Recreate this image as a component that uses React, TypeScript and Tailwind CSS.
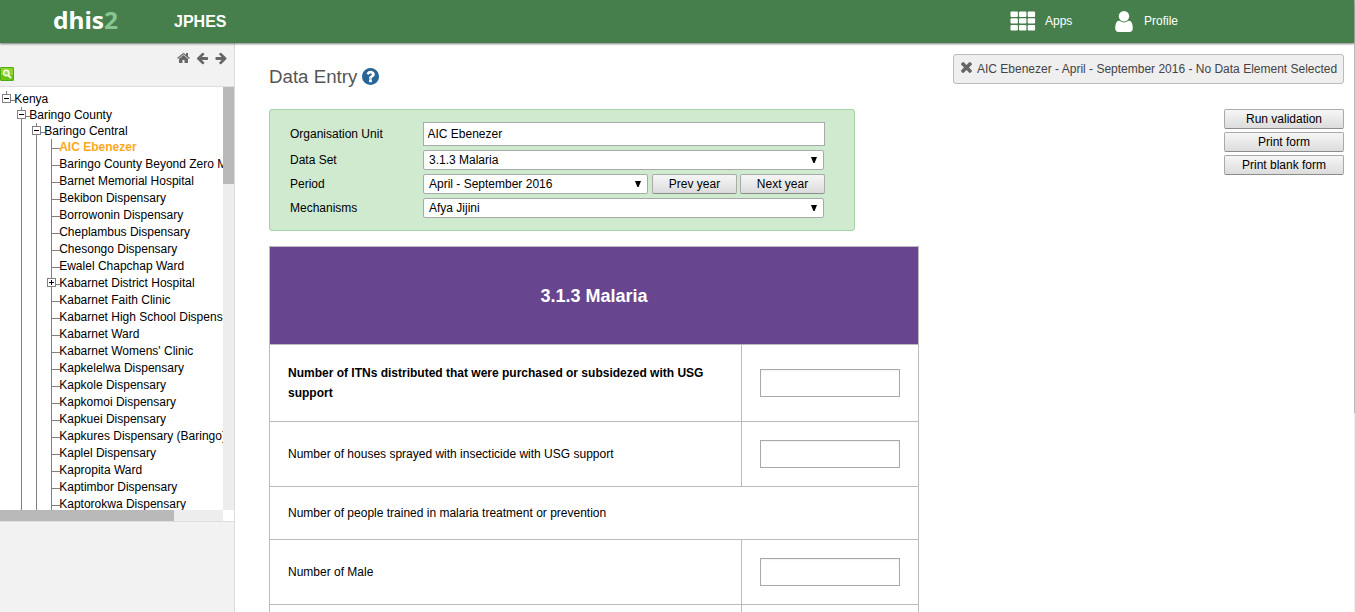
import React from "react";

const ICONS = {
  home: {
    box: "0 0 1664 1792",
    d: "M1408 992v480q0 26-19 45t-45 19h-384v-384h-256v384h-384q-26 0-45-19t-19-45v-480q0-1 .5-3t.5-3l575-474 575 474q1 2 1 6zm223-69l-62 74q-8 9-21 11h-3q-13 0-21-7l-692-577-692 577q-12 8-24 7-13-2-21-11l-62-74q-8-10-7-23.5t11-21.5l719-599q32-26 76-26t76 26l244 204v-195q0-14 9-23t23-9h192q14 0 23 9t9 23v408l219 182q10 8 11 21.5t-7 23.5z",
  },
  arrow: {
    box: "0 0 1664 1792",
    d: "M1600 896v128q0 53-32.5 90.5t-84.5 37.5h-704l293 294q38 36 38 90t-38 90l-75 76q-37 37-90 37-52 0-91-37l-651-652q-37-37-37-90 0-52 37-91l651-650q38-38 91-38 52 0 90 38l75 74q38 38 38 91t-38 91l-293 293h704q52 0 84.5 37.5t32.5 90.5z",
  },
  user: {
    box: "256 128 1280 1536",
    d: "M1536 1399q0 109-62.5 187t-150.5 78h-854q-88 0-150.5-78t-62.5-187q0-85 8.5-160.5t31.5-152 58.5-131 94-89 134.5-34.5q131 128 313 128t313-128q76 0 134.5 34.5t94 89 58.5 131 31.5 152 8.5 160.5zm-256-887q0 159-112.5 271.5t-271.5 112.5-271.5-112.5-112.5-271.5 112.5-271.5 271.5-112.5 271.5 112.5 112.5 271.5z",
  },
  help: {
    box: "128 128 1536 1536",
    d: "M1024 1376v-192q0-14-9-23t-23-9h-192q-14 0-23 9t-9 23v192q0 14 9 23t23 9h192q14 0 23-9t9-23zm256-672q0-88-55.5-163t-138.5-116-170-41q-243 0-371 213-15 24 8 42l132 100q7 6 19 6 16 0 25-12 53-68 86-92 34-24 86-24 48 0 85.5 26t37.5 59q0 38-20 61t-68 45q-63 28-115.5 86.5t-52.5 125.5v36q0 14 9 23t23 9h192q14 0 23-9t9-23q0-19 21.5-49.5t54.5-49.5q32-18 49-28.5t46-35 44.5-48 28-60.5 12.5-81zm384 192q0 209-103 385.5t-279.5 279.5-385.5 103-385.5-103-279.5-279.5-103-385.5 103-385.5 279.5-279.5 385.5-103 385.5 103 279.5 279.5 103 385.5z",
  },
  close: {
    box: "302 366 1188 1188",
    d: "M1490 1322q0 40-28 68l-136 136q-28 28-68 28t-68-28l-294-294-294 294q-28 28-68 28t-68-28l-136-136q-28-28-28-68t28-68l294-294-294-294q-28-28-28-68t28-68l136-136q28-28 68-28t68 28l294 294 294-294q28-28 68-28t68 28l136 136q28 28 28 68t-28 68l-294 294 294 294q28 28 28 68z",
  },
};

function Icon({ name, className }: { name: keyof typeof ICONS; className: string }) {
  return (
    <svg viewBox={ICONS[name].box} className={className} fill="currentColor">
      <path d={ICONS[name].d} />
    </svg>
  );
}

function AppsIcon() {
  return (
    <svg viewBox="0 0 26 20" className="mb-0.5 h-5 w-[26px]" fill="currentColor">
      {[0.5, 7.2, 14].map((y) =>
        [0.5, 9, 17.7].map((x) => <rect key={`${x}-${y}`} x={x} y={y} width="7.4" height="5.4" rx="1" />)
      )}
    </svg>
  );
}

function SearchIcon() {
  return (
    <svg viewBox="0 0 14 14" className="h-3.5 w-3.5">
      <rect x="0.5" y="0.5" width="13" height="13" rx="0.5" fill="#8ed629" stroke="#52ab14" />
      <rect x="1" y="8" width="12" height="5" fill="#68c40c" />
      <circle cx="6.2" cy="6" r="2.7" fill="#a5de5c" stroke="#f6fcef" strokeWidth="1.4" />
      <path d="M8 8l3 3" stroke="#f6fcef" strokeWidth="1.8" />
    </svg>
  );
}

type Cell = "blank" | "line" | "leaf" | "root" | "minus" | "plus";

function TreeCell({ kind }: { kind: Cell }) {
  if (kind === "blank") return <div className="w-[15px] shrink-0" />;
  if (kind === "line")
    return (
      <div className="flex w-[15px] shrink-0 pl-1.5">
        <div className="w-px bg-[#808080]" />
      </div>
    );
  if (kind === "leaf")
    return (
      <div className="flex w-[15px] shrink-0 pl-1.5">
        <div className="w-px bg-[#808080]" />
        <div className="mt-[9px] h-px flex-1 bg-[#808080]" />
      </div>
    );
  return (
    <div className="flex w-[15px] shrink-0 pl-0.5">
      <div className="flex w-[9px] flex-col items-center">
        <div className="h-[3px] w-px bg-[#808080]" />
        <svg viewBox="0 0 9 9" className="h-[9px] w-[9px] shrink-0" shapeRendering="crispEdges">
          <rect x="0.5" y="0.5" width="8" height="8" fill="#fff" stroke="#808080" />
          <rect x="2" y="4" width="5" height="1" fill="#000" />
          {kind === "plus" && <rect x="4" y="2" width="1" height="5" fill="#000" />}
        </svg>
        {kind !== "root" && <div className="w-px flex-1 bg-[#808080]" />}
      </div>
      <div className="mt-[9px] h-px flex-1 bg-[#808080]" />
    </div>
  );
}

const FACILITIES = [
  "AIC Ebenezer",
  "Baringo County Beyond Zero Mobile Clinic",
  "Barnet Memorial Hospital",
  "Bekibon Dispensary",
  "Borrowonin Dispensary",
  "Cheplambus Dispensary",
  "Chesongo Dispensary",
  "Ewalel Chapchap Ward",
  "Kabarnet District Hospital",
  "Kabarnet Faith Clinic",
  "Kabarnet High School Dispensary",
  "Kabarnet Ward",
  "Kabarnet Womens' Clinic",
  "Kapkelelwa Dispensary",
  "Kapkole Dispensary",
  "Kapkomoi Dispensary",
  "Kapkuei Dispensary",
  "Kapkures Dispensary (Baringo)",
  "Kaplel Dispensary",
  "Kapropita Ward",
  "Kaptimbor Dispensary",
  "Kaptorokwa Dispensary",
];

function TreeRow({ cells, label, tall, selected }: { cells: Cell[]; label: string; tall?: boolean; selected?: boolean }) {
  return (
    <li className={`flex ${tall ? "h-[17px]" : "h-4"}`}>
      {cells.map((c, i) => (
        <TreeCell key={i} kind={c} />
      ))}
      <span className={`-ml-[0.8px] whitespace-nowrap leading-4 ${selected ? "font-bold text-[#ffa81c]" : ""}`}>{label}</span>
    </li>
  );
}

function Sidebar() {
  return (
    <aside className="flex w-[235px] shrink-0 flex-col border-r border-[#dcdcdc] bg-[#f2f2f2]">
      <div className="flex h-[23px] items-end justify-end gap-[6.5px] pr-[6.5px] pb-[1.5px] text-[#666]">
        <Icon name="home" className="h-[14px] w-[13px]" />
        <Icon name="arrow" className="h-[14px] w-[12.5px]" />
        <Icon name="arrow" className="h-[14px] w-[12.5px] -scale-x-100" />
      </div>
      <div className="mt-px h-[19px]">
        <SearchIcon />
      </div>
      <div className="flex h-[436px] flex-col border-y border-[#dedede] bg-white">
        <div className="flex h-[423px]">
          <ul className="w-[223px] overflow-hidden pt-1">
            <TreeRow cells={["root"]} label="Kenya" />
            <TreeRow cells={["blank", "minus"]} label="Baringo County" />
            <TreeRow cells={["blank", "line", "minus"]} label="Baringo Central" />
            {FACILITIES.map((f, i) => (
              <TreeRow
                key={f}
                cells={["blank", "line", "line", f === "Kabarnet District Hospital" ? "plus" : "leaf"]}
                label={f}
                tall
                selected={i === 0}
              />
            ))}
          </ul>
          <div className="w-[11px] bg-[#ededed]">
            <div className="h-[97px] bg-[#b9b9b9]" />
          </div>
        </div>
        <div className="h-[11px] w-[223px] bg-[#ededed]">
          <div className="h-full w-[174px] bg-[#b9b9b9]" />
        </div>
      </div>
    </aside>
  );
}

function Header() {
  return (
    <header className="z-10 flex h-[43px] shrink-0 items-center bg-[#467f4b] text-white shadow-[0_1px_2px_rgba(0,0,0,0.5)]">
      <div className="w-[120px] shrink-0 pl-[53px] pb-0.5 font-['Noto_Sans','Open_Sans',sans-serif] text-[22.5px] font-bold leading-[41px]">
        <span className="inline-block origin-left scale-x-[1.09]">
          dhis<span className="text-[#87c78f]">2</span>
        </span>
      </div>
      <div className="w-[890px] pl-[54px] text-[16px] font-bold">JPHES</div>
      <div className="flex w-[104px] items-center gap-[9px]">
        <AppsIcon />
        <span className="pb-0.5">Apps</span>
      </div>
      <div className="flex items-center gap-[10px]">
        <Icon name="user" className="h-[21px] w-5" />
        <span className="pb-0.5">Profile</span>
      </div>
    </header>
  );
}

function Button({ label, className }: { label: string; className: string }) {
  return (
    <button
      className={`flex h-5 items-center justify-center rounded-[2px] border border-[#aaa] border-b-[#8c8c8c] bg-linear-to-b from-[#f6f6f6] to-[#dcdcdc] leading-none ${className}`}
    >
      {label}
    </button>
  );
}

function Select({ value, className }: { value: string; className: string }) {
  return (
    <div className={`flex h-5 items-center justify-between rounded-[2px] border border-[#a9a9a9] bg-white pl-[5px] pr-1.5 leading-[18px] ${className}`}>
      <span>{value}</span>
      <svg viewBox="0 0 6 6" className="h-1.5 w-1.5">
        <path d="M0 0h6L3.6 6H2.4z" />
      </svg>
    </div>
  );
}

function SelectionForm() {
  return (
    <div className="mt-[22px] h-[122px] w-[586px] shrink-0 rounded-[3px] border border-[#a5d3a5] bg-[#d0ead0] pl-5 pt-3">
      <div className="flex items-center">
        <label className="w-[133px]">Organisation Unit</label>
        <input readOnly value="AIC Ebenezer" className="h-6 w-[402px] border border-[#a9a9a9] bg-white pl-[3.5px] outline-none" />
      </div>
      <div className="mt-1 flex items-center">
        <label className="w-[133px]">Data Set</label>
        <Select value="3.1.3 Malaria" className="w-[401px]" />
      </div>
      <div className="mt-1 flex items-center">
        <label className="w-[133px]">Period</label>
        <Select value="April - September 2016" className="w-[225px]" />
        <Button label="Prev year" className="ml-1 w-[85px]" />
        <Button label="Next year" className="ml-[3px] w-[85px]" />
      </div>
      <div className="mt-1 flex items-center">
        <label className="w-[133px]">Mechanisms</label>
        <Select value="Afya Jijini" className="w-[401px]" />
      </div>
    </div>
  );
}

function EntryRow({ label, height, bold, field = true }: { label: string; height: string; bold?: boolean; field?: boolean }) {
  return (
    <div className={`flex border-b border-[#bbb] ${height}`}>
      <div className={`flex flex-1 items-center px-[18px] leading-5 ${bold ? "font-bold" : ""}`}>{label}</div>
      {field && (
        <div className="flex w-[177px] items-center border-l border-[#bbb] pl-[18px]">
          <input className="h-7 w-[140px] border border-[#a9a9a9] shadow-[inset_0_1px_2px_rgba(0,0,0,0.06)] outline-none" />
        </div>
      )}
    </div>
  );
}

function EntryTable() {
  return (
    <section className="mt-[15px] w-[650px] shrink-0 border border-[#bbb]">
      <h2 className="flex h-[98px] items-center justify-center border-b border-[#bbb] bg-[#68468f] pt-px text-[18px] font-bold text-white">
        3.1.3 Malaria
      </h2>
      <EntryRow label="Number of ITNs distributed that were purchased or subsidezed with USG support" height="h-[77px]" bold />
      <EntryRow label="Number of houses sprayed with insecticide with USG support" height="h-[65px]" />
      <EntryRow label="Number of people trained in malaria treatment or prevention" height="h-[53px]" field={false} />
      <EntryRow label="Number of Male" height="h-[65px]" />
      <EntryRow label="Number of Female" height="h-[65px]" />
    </section>
  );
}

export default function App() {
  return (
    <div className="flex h-[612px] w-[1355px] overflow-hidden bg-white font-['Liberation_Sans',Arial,sans-serif] text-[12px] text-black">
      <div className="flex w-[1354px] shrink-0 flex-col">
        <Header />
        <div className="flex min-h-0 flex-1">
          <Sidebar />
          <main className="flex min-w-0 flex-1 justify-between overflow-hidden pl-[34px] pr-2.5">
            <div className="flex flex-col">
              <h1 className="mt-6 flex h-5 shrink-0 items-center gap-[5px] text-[18.7px] leading-5 text-[#555]">
                Data Entry
                <Icon name="help" className="mb-[2px] h-[17px] w-[17px] text-[#276696]" />
              </h1>
              <SelectionForm />
              <EntryTable />
            </div>
            <div className="flex flex-col items-end">
              <div className="mt-[11px] flex h-[30px] w-[391px] items-center rounded-[3px] border border-[#bbb] bg-[#efefef] pl-[7px] text-[#444]">
                <Icon name="close" className="mr-[5px] mb-[3px] h-[11px] w-[11px] text-[#666]" />
                <span className="whitespace-nowrap">AIC Ebenezer - April - September 2016 - No Data Element Selected</span>
              </div>
              <div className="mt-[25px] flex flex-col gap-[3px]">
                <Button label="Run validation" className="w-[120px]" />
                <Button label="Print form" className="w-[120px]" />
                <Button label="Print blank form" className="w-[120px]" />
              </div>
            </div>
          </main>
        </div>
      </div>
      <div className="w-px bg-[#ededed]">
        <div className="h-[413px] bg-[#b9b9b9]" />
      </div>
    </div>
  );
}
